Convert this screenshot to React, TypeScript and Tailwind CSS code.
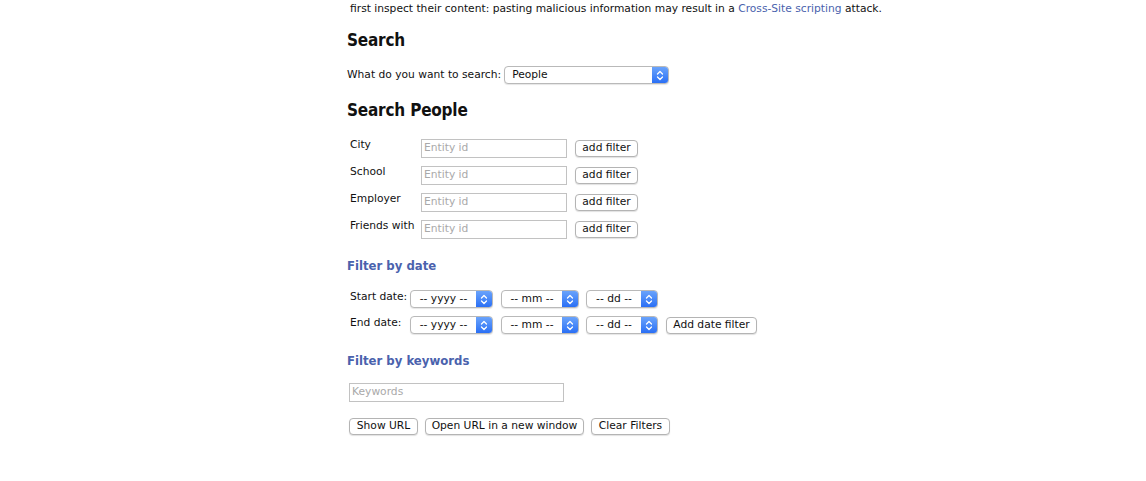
import React from "react";

const font = { fontFamily: '"DejaVu Sans", "Liberation Sans", sans-serif' };
const bold = { fontFamily: '"DejaVu Sans Condensed", "DejaVu Sans", "Liberation Sans", sans-serif' };

function Btn({ children, w }: { children: React.ReactNode; w: string }) {
  return (
    <div
      className={`${w} h-[17px] flex items-center justify-center rounded-[4px] border border-[#b4b4b4] bg-white text-[10.7px] text-[#111] shadow-[0_1px_1px_rgba(0,0,0,0.12)]`}
    >
      {children}
    </div>
  );
}

function Chev() {
  return (
    <svg width="8" height="11" viewBox="0 0 8 11" fill="none">
      <path d="M1.5 4 L4 1.5 L6.5 4" stroke="white" strokeWidth="1.3" strokeLinecap="round" strokeLinejoin="round" />
      <path d="M1.5 7 L4 9.5 L6.5 7" stroke="white" strokeWidth="1.3" strokeLinecap="round" strokeLinejoin="round" />
    </svg>
  );
}

function Sel({ label, w, center }: { label: string; w: string; center?: boolean }) {
  return (
    <div
      className={`${w} h-[18px] flex rounded-[4px] border border-[#b9b9b9] bg-white overflow-hidden shadow-[0_1px_1px_rgba(0,0,0,0.1)]`}
    >
      <div className={`flex-1 flex items-center text-[10.7px] text-[#111] ${center ? "justify-center" : "pl-[7px]"}`}>
        {label}
      </div>
      <div className="w-[16px] flex items-center justify-center bg-gradient-to-b from-[#6aa3fb] to-[#2a6ff5]">
        <Chev />
      </div>
    </div>
  );
}

function Field({ w, ph }: { w: string; ph: string }) {
  return (
    <div className={`${w} h-[19px] border border-[#c2c2c2] bg-white flex items-center pl-[2px] text-[10.7px] text-[#a9a9a9]`}>
      {ph}
    </div>
  );
}

export default function App() {
  const rows = ["City", "School", "Employer", "Friends with"];
  return (
    <div className="w-[1146px] h-[481px] bg-white overflow-hidden text-[#111]" style={font}>
      <div className="pl-[347px]">
        <p className="pl-[3px] pt-[2px] text-[10.7px] leading-[14px]">
          first inspect their content: pasting malicious information may result in a{" "}
          <span className="text-[#4a62ad]">Cross-Site scripting</span> attack.
        </p>
        <h2 className="mt-[13px] text-[17px] leading-[22px] font-bold tracking-[-0.2px]" style={bold}>Search</h2>
        <div className="mt-[15px] flex items-center gap-[3px] text-[10.7px]">
          <span>What do you want to search:</span>
          <Sel label="People" w="w-[165px]" />
        </div>
        <h2 className="mt-[15px] text-[17px] leading-[22px] font-bold tracking-[-0.2px]" style={bold}>Search People</h2>
        <div className="mt-[18px] pl-[3px] flex flex-col gap-[8px]">
          {rows.map((r) => (
            <div key={r} className="flex items-start h-[19px]">
              <span className="w-[71px] text-[10.7px] leading-[13px] -mt-[1px]">{r}</span>
              <Field w="w-[146px]" ph="Entity id" />
              <div className="ml-[8px] mt-[1px]">
                <Btn w="w-[63px]">add filter</Btn>
              </div>
            </div>
          ))}
        </div>
        <h3 className="mt-[19px] text-[13px] leading-[16px] font-bold text-[#4a62ad]" style={bold}>Filter by date</h3>
        <div className="mt-[16px] pl-[3px] flex flex-col gap-[8px]">
          {["Start date:", "End date:"].map((l, i) => (
            <div key={l} className="flex items-center h-[18px]">
              <span className="w-[60px] text-[10.7px] -mt-[3px]">{l}</span>
              <Sel label="-- yyyy --" w="w-[83px]" center />
              <div className="ml-[8px]">
                <Sel label="-- mm --" w="w-[78px]" center />
              </div>
              <div className="ml-[7px]">
                <Sel label="-- dd --" w="w-[72px]" center />
              </div>
              {i === 1 && (
                <div className="ml-[8px]">
                  <Btn w="w-[91px]">Add date filter</Btn>
                </div>
              )}
            </div>
          ))}
        </div>
        <h3 className="mt-[19px] text-[13px] leading-[16px] font-bold text-[#4a62ad]" style={bold}>Filter by keywords</h3>
        <div className="mt-[14px] pl-[2px]">
          <Field w="w-[215px]" ph="Keywords" />
        </div>
        <div className="mt-[16px] pl-[2px] flex gap-[7px]">
          <Btn w="w-[69px]">Show URL</Btn>
          <Btn w="w-[159px]">Open URL in a new window</Btn>
          <Btn w="w-[79px]">Clear Filters</Btn>
        </div>
      </div>
    </div>
  );
}
